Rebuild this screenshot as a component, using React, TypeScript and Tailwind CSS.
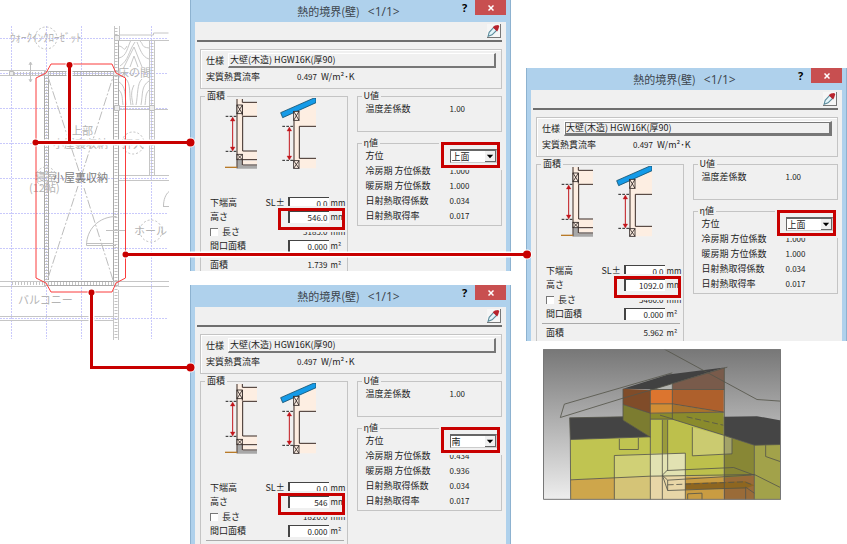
import { useId } from "react";

type DialogData = {
  size: string;
  height: string;
  length: string;
  area?: string;
  direction: string;
  cooling: string;
  heating: string;
  formula?: string;
  focused?: boolean;
};

const dialogs: Record<string, DialogData> = {
  top: {
    size: "h-[271px]",
    height: "546.0",
    length: "3185.0",
    area: "1.739",
    direction: "上面",
    cooling: "1.000",
    heating: "1.000",
  },
  right: {
    size: "h-[273px]",
    height: "1092.0",
    length: "5460.0",
    area: "5.962",
    direction: "上面",
    cooling: "1.000",
    heating: "1.000",
    formula: "(5.460 × 1.092 - 0.000)",
    focused: true,
  },
  bottom: {
    size: "h-[259px]",
    height: "546",
    length: "1820.0",
    direction: "南",
    cooling: "0.434",
    heating: "0.936",
  },
};

const inputClass =
  "h-[12px] w-[41px] border-t border-l-2 border-[#444] bg-white pr-px text-right text-[8px] leading-[11px] outline-none";
const unitClass = "w-[15px] pl-[2px] text-[8px]";

function CrossBox({ x, y, w, h }: { x: number; y: number; w: number; h: number }) {
  return (
    <g stroke="#2a2220" strokeWidth="2.5" fill="#fdeee2">
      <rect x={x} y={y} width={w} height={h} />
      <path d={`M${x} ${y}l${w} ${h}M${x + w} ${y}l${-w} ${h}`} />
    </g>
  );
}

function Arrow({ x, y1, y2 }: { x: number; y1: number; y2: number }) {
  return (
    <g fill="#c1161c" stroke="#c1161c" strokeWidth="3">
      <path d={`M${x} ${y1 + 6}V${y2 - 6}`} />
      <path strokeWidth="1" d={`M${x} ${y1}l7 12h-14zM${x} ${y2}l7 -12h-14z`} />
    </g>
  );
}

function WallSections() {
  return (
    <svg className="-mt-[3px] ml-[24px] h-[72px] w-[91px]" viewBox="15 9 273 216" fill="none" aria-hidden="true">
      <path fill="#fdeee2" d="M50 12h16v10h45v42H68v104h43v26H50z" />
      <path fill="#a8a8a8" d="M52 194h14v18h45v9H52z" />
      <path fill="#fdeee2" d="M67 197h44v10H67z" />
      <path stroke="#3a2a25" strokeWidth="3" d="M51 12v208M67 12v10h44M67 30v32M111 64H68v104h43M67 194h44M67 194v16h44" />
      <path stroke="#b87a28" strokeWidth="4" d="M15 217h36" />
      <path stroke="#222" strokeWidth="3" strokeDasharray="8 4" d="M17 64h34M17 169h34" />
      <CrossBox x={51} y={30} w={16} h={26} />
      <CrossBox x={51} y={178} w={16} h={16} />
      <Arrow x={38} y1={66} y2={168} />

      <path fill="#fdeee2" d="M222 60l66-38v72h-50v96h50v30h-66z" />
      <path stroke="#3a2a25" strokeWidth="3" d="M222 76v122M288 94h-50v96h50" />
      <path stroke="#222" strokeWidth="3" strokeDasharray="8 4" d="M187 94h34M187 196h34" />
      <path fill="#159be8" stroke="#15506f" strokeWidth="2.5" d="M182 53L282 9h6v14L188 68z" />
      <CrossBox x={221} y={49} w={16} h={27} />
      <CrossBox x={221} y={197} w={16} h={23} />
      <Arrow x={208} y1={96} y2={195} />
    </svg>
  );
}

function Picker() {
  return (
    <button type="button" aria-label="スポイト" className="h-[14px] w-[14px] border-r border-b border-[#777] bg-[#f6f6f6]">
      <svg viewBox="0 0 36 36" className="block h-[13px] w-[13px]" fill="none">
        <path d="M3 34l3-11L19 9l8 8L14 30z" fill="#e4f5fa" stroke="#5a8a9a" strokeWidth="3" />
        <path d="M16 9l12 12 3-6 3-9-3-3-9 1z" fill="#b8232c" />
      </svg>
    </button>
  );
}

function Legend({ children }: { children: string }) {
  return <legend className="ml-[4px] px-[2px] leading-[10px]">{children}</legend>;
}

function Highlight({ className }: { className: string }) {
  return (
    <span
      className={`pointer-events-none absolute z-10 border-[3px] border-[#c80000] shadow-[0_0_0_2px_#f0f0f0] ${className}`}
    />
  );
}

function Dialog({ data }: { data: DialogData }) {
  const uid = useId();
  const rates = [
    { label: "冷房期 方位係数", value: data.cooling },
    { label: "暖房期 方位係数", value: data.heating },
    { label: "日射熱取得係数", value: "0.034" },
    { label: "日射熱取得率", value: "0.017" },
  ];

  return (
    <section
      className={`relative overflow-hidden border-x border-[#8db2d0] bg-[#afd1ec] px-[4px] text-[9px] leading-[14px] whitespace-nowrap text-[#1c1c1c] ${data.size}`}
    >
      <header className="flex h-[22px] items-start">
        <h2 className="flex-1 pl-[48px] text-center text-[11px] leading-[23px] text-[#3c454d]">
          熱的境界(壁)
          <span className="ml-[8px] font-['Open_Sans',sans-serif] text-[12px]">&lt;1/1&gt;</span>
        </h2>
        <button type="button" className="w-[21px] font-['Open_Sans',sans-serif] text-[11px] leading-[16px] font-bold text-black">
          ?
        </button>
        <button type="button" aria-label="閉じる" className="flex h-[15px] w-[31px] items-center justify-center bg-[#c84f50]">
          <svg viewBox="0 0 6 6" className="h-[6px] w-[6px]" stroke="#fff" strokeWidth="1.5">
            <path d="M.5 .5l5 5M5.5 .5l-5 5" />
          </svg>
        </button>
      </header>

      <div className="h-full bg-[#f0f0f0] pr-[4px] pl-[2px]">
        <div className="flex h-[20px] justify-end border-b-2 border-[#6e6e6e] pt-[2px] pr-px">
          <Picker />
        </div>

        <div className="mt-[7px] ml-[3px] h-[40px] border border-[#c4c4c4] px-[5px] pt-[3px] shadow-[inset_1px_1px_0_#fff]">
          <div className="flex items-center">
            <span className="w-[22px] pt-[1px]">仕様</span>
            <button
              type="button"
              className="h-[15px] flex-1 border-t border-r-2 border-b-2 border-l border-t-white border-r-[#777] border-b-[#777] border-l-white text-left"
            >
              <span className={`block leading-[10px] ${data.focused ? "border border-[#777]" : "border border-transparent"}`}>
                大壁(木造) HGW16K(厚90)
              </span>
            </button>
          </div>
          <div className="flex pt-[2px]">
            <span className="w-[91px]">実質熱貫流率</span>
            <span className="w-[24px] text-[8px]">0.497</span>
            <span>W/m²･K</span>
          </div>
        </div>

        <div className="mt-[2px] ml-[3px] flex gap-[9px]">
          <fieldset className="h-[200px] min-w-0 flex-1 border border-[#c4c4c4]">
            <Legend>面積</Legend>
            <WallSections />
            <div className="mt-[25px] pr-[3px] pl-[9px]">
              <div className="flex h-[15px] items-center">
                <label htmlFor={`${uid}-base`} className="flex-1">下端高</label>
                <span className="w-[22px]">SL±</span>
                <input id={`${uid}-base`} defaultValue="0.0" className={inputClass} />
                <span className={unitClass}>mm</span>
              </div>
              <div className="flex h-[14px] items-center">
                <label htmlFor={`${uid}-height`} className="flex-1">高さ</label>
                <input id={`${uid}-height`} defaultValue={data.height} className={inputClass} />
                <span className={unitClass}>mm</span>
              </div>
              <div className="flex h-[15px] items-center">
                <input
                  id={`${uid}-length`}
                  type="checkbox"
                  className="mr-[4px] h-[8px] w-[8px] appearance-none border-t border-l border-[#777] bg-white"
                />
                <label htmlFor={`${uid}-length`} className="flex-1">長さ</label>
                <span className="pr-px text-[8px]">{data.length}</span>
                <span className={unitClass}>mm</span>
              </div>
              <div className="flex h-[14px] items-center">
                <label htmlFor={`${uid}-opening`} className="flex-1">間口面積</label>
                <input id={`${uid}-opening`} defaultValue="0.000" className={inputClass} />
                <span className={unitClass}>m²</span>
              </div>
            </div>
            <div className="mt-[2px] mr-[3px] ml-[5px] border-t border-[#aaa] pt-[2px] pl-[4px]">
              {data.area && (
                <div className="flex">
                  <span className="flex-1">面積</span>
                  <span className="pr-px text-[8px]">{data.area}</span>
                  <span className={unitClass}>m²</span>
                </div>
              )}
              {data.formula && <div className="text-[8px] leading-[10px]">{data.formula}</div>}
            </div>
          </fieldset>

          <div className="min-w-0 flex-1">
            <fieldset className="h-[41px] border border-[#c4c4c4]">
              <Legend>U値</Legend>
              <div className="flex pt-px pl-[8px]">
                <span className="w-[84px]">温度差係数</span>
                <span className="text-[8px]">1.00</span>
              </div>
            </fieldset>
            <fieldset className="mt-[6px] h-[88px] border border-[#c4c4c4]">
              <Legend>η値</Legend>
              <div className="flex h-[15px] items-center pl-[8px]">
                <label htmlFor={`${uid}-direction`} className="w-[84px]">方位</label>
                <div className="relative">
                  <select
                    id={`${uid}-direction`}
                    defaultValue={data.direction}
                    className="block h-[14px] w-[47px] appearance-none border border-t-2 border-[#666] border-r-[#ccc] border-b-[#ccc] bg-white pl-px text-[9px] leading-[11px]"
                  >
                    <option>上面</option>
                    <option>南</option>
                  </select>
                  <svg
                    viewBox="0 0 11 11"
                    className="pointer-events-none absolute top-[2px] right-px h-[11px] w-[11px] border-r border-b border-[#666] bg-[#f0f0f0]"
                  >
                    <path d="M2 4h7L5.5 8z" fill="#000" />
                  </svg>
                </div>
              </div>
              {rates.map((rate) => (
                <div key={rate.label} className="flex pl-[8px] leading-[15px]">
                  <span className="w-[84px]">{rate.label}</span>
                  <span className="text-[8px]">{rate.value}</span>
                </div>
              ))}
            </fieldset>
          </div>
        </div>
      </div>

      <Highlight className="top-[208px] left-[87px] h-[22px] w-[67px]" />
      <Highlight className="top-[142px] left-[250px] h-[26px] w-[59px]" />
    </section>
  );
}

function FloorPlan() {
  return (
    <svg viewBox="0 0 169 340" className="block h-[340px] w-[169px]" fill="none" aria-label="平面図">
      <g stroke="#c9c9fb" strokeDasharray="2 1">
        <path d="M11.5 26v313M46.5 26v313M81.5 26v313M151.5 26v313" />
        <path d="M0 38.5h168M0 73.5h168M0 108.5h168M0 143.5h168M0 178.5h168M0 213.5h168M0 248.5h168M0 318.5h168" />
      </g>

      {/* walls */}
      <g stroke="#c6c6c6">
        <path d="M0 70.5h46M0 75.5h46M0 281.5h46M0 286.5h46M118 281.5h51M118 286.5h51M0 316.5h113M0 320.5h113" />
        <path d="M114.5 26v45M119.5 26v9h34v-2h15M119 40.5h50M118.5 290v50M113.5 290v50M149.5 40v66M154.5 40v66M149.5 110v66M154.5 110v66" />
        <path d="M118 106.5h36M118 109.5h50M118 175.5h51M118 180.5h51" />
      </g>
      <g stroke="#a9a9a9">
        <path d="M44.5 71v212M48.5 75v205M113.5 71v212M118.5 40v245M44 71.5h71M48 75.5h66M48 281.5h66M44 285.5h72" />
      </g>
      <g stroke="#c4c4c4" strokeWidth="3" strokeDasharray="1 2">
        <path d="M46.5 75v207M116 28v312M47 73.5h67M14 73.5h30M12 283.5h32M48 283.5h66M152 40v136" />
      </g>
      <g stroke="#bdbdbd" fill="#eeeeee">
        <path d="M44.5 71.5h4v4h-4zM113.5 71.5h5v4h-5zM44.5 281.5h4v4h-4zM113.5 281.5h5v4h-5zM9.5 71.5h4v4h-4zM114.5 35.5h5v5h-5zM149.5 105.5h5v5h-5zM114.5 105.5h5v5h-5z" />
      </g>
      <path stroke="#bdbdbd" strokeDasharray="9 2 2 2" d="M48 77l33 100l32-100M48 278l30-92M113 280L84 188" />

      {/* tokonoma wood grain */}
      <g stroke="#c8c8c8">
        <path d="M119 46c6 1 4 7 8 0M119 58c8-2 8-10 12-18M120 66c9-6 8-14 15-24M124 67l10-20 8 20M130 67l4-11 4 11M149 48c-8-1-5-3-9-7M149 59c-7-2-9-10-12-17" />
        <path d="M119 82c7 4 6 14 7 23M119 90c4 4 3 9 4 15M126 79c5 5 3 16 5 26M134 85c-4 8-2 13-1 20M149 81c-8 5-6 13-8 24M149 90c-4 4-3 9-4 15M142 79c-5 4-4 16-6 26" />
      </g>

      {/* doors and centre marks */}
      <g stroke="#c0c0c0">
        <path d="M116 245.5H86.5c0-16 12-29 30-29M86 243.5h28M106 230.500h20M163.5 206.5c0-7 2-12 5.500-15M163 206.500h6M30.500 62v20M29 65l1.5-3 1.5 3M29 79l1.5 3 1.5-3" />
        <g strokeDasharray="2 2">
          <circle cx="46" cy="38" r="11" />
          <circle cx="133" cy="143" r="11" />
          <circle cx="151" cy="231" r="11" />
          <circle cx="46" cy="177" r="10" />
        </g>
      </g>

      <g fill="#b4b4b4" className="font-['Noto_Sans_CJK_JP',sans-serif] text-[11px]">
        <text x="10" y="42">ｳｫｰｸｲﾝｸﾛｰｾﾞｯﾄ</text>
        <text x="118" y="77">床の間</text>
        <text x="71" y="135">上部</text>
        <text x="53" y="148">小屋裏収納</text>
        <text x="122" y="148">押入</text>
        <text x="35" y="181">寝室</text>
        <text x="29" y="192">(12帖)</text>
        <text x="134" y="235">ホール</text>
        <text x="18" y="304">バルコニー</text>
        <text x="53" y="182" fill="#808080">小屋裏収納</text>
      </g>

      <path stroke="#fa3c3c" d="M51 64h61l4 9 9.5 5v200l-9.5 5-4 9H51l-5-9-10-5V78l10-5z" />
    </svg>
  );
}

function HouseModel() {
  return (
    <svg viewBox="9 12 714 452" className="ml-[17px] block h-[151px] w-[238px]" aria-label="熱的境界モデル">
      <defs>
        <linearGradient id="sky" x1="0" y1="0" x2="0" y2="1">
          <stop offset="0" stopColor="#777" />
          <stop offset="1" stopColor="#eee" />
        </linearGradient>
      </defs>
      <path fill="url(#sky)" d="M9 12h714v452H9z" />

      <path fill="#c0c451" d="M91 283l240-8v118L92 404z" />
      <path fill="#cea64b" d="M92 404l239-11v71H92z" />
      <path fill="#bdc04c" d="M331 222l66 0 154 50v122l-220 0z" />
      <path fill="#c99c42" d="M331 394h220v70H331z" />
      <path fill="#888735" d="M551 270l92 30v90l-92 18z" />
      <path fill="#9a6b38" d="M551 398l92-8v74h-92z" />
      <path fill="#a2a24a" d="M643 298l80-2v168h-80z" />

      <path fill="#444" d="M89 218l160-3 82 60-240 8z" />
      <path fill="#454545" d="M551 215l100-2 72 13v72l-80 2-92-30z" />
      <path fill="#7c7c30" d="M249 178l82 26v72l-82-51z" />
      <path fill="#8a8b2c" d="M331 204l220-2v68l-154-48-66 0z" />
      <path fill="#804c29" d="M249 131l82 4v70l-82-27z" />
      <path fill="#dc752f" d="M331 134h66v42h-66z" />
      <path fill="#d18d35" d="M331 176h66v26l-66 3z" />
      <path fill="#ae602c" d="M397 133h154v68l-154-24z" />
      <path fill="#a8722c" d="M397 177l154 24-154 3z" />
      <path fill="#795b4b" d="M397 114l156-46v65H397z" />
      <path fill="#b4b4b0" d="M342 132l55-18v18z" />
      <path fill="#414141" d="M249 131L385 88l168-21-211 65z" />

      <path fill="#d0d076" d="M223 331l108-5v68l-108 4z" />
      <path fill="#d5c477" d="M223 398l108-4v70H223z" />
      <path fill="#e2e2b2" d="M331 326l105-2v70H331z" />
      <path fill="#e8d6a7" d="M331 394h105v70H331z" />
      <path fill="#cbcb70" d="M457 246l94 26v57l-94 3z" />
      <path fill="#a3a368" d="M551 272l25 8v46l-25 2z" />
      <path fill="#9a9b3b" d="M367 224h16v100h-16z" />
      <path fill="#8e6620" d="M436 414l180-6 27 12-26 10-181 3z" />

      <g fill="none" stroke="#55554b" strokeWidth="2.5">
        <path d="M373 12l278 151 72 5M61 217l12-40L397 83M61 217l188-58 93-27 220-66M249 131v94l82 51M331 134v330M397 114v108M553 67v397" />
        <path d="M331 133h222M249 178l82 26 220-3M331 176h66l154 25M397 222l154 48 92 30 80-2M89 218l2 65 1 181M89 218l160-3M91 283l240-8" />
        <path d="M238 281v32h57v-35M223 331l213-7v140M223 331v133M457 246v86l119-6v-46M367 224v240M383 224v152M643 300v164M677 300v34l46 16" />
        <path d="M92 404l239-11 312-5 80 40M367 390l14-14 200-9 62 23M367 390l16 15 260-16M383 405v31l234-8M367 390l16 46" />
        <path d="M443 464v-18l43-2v20M617 464v-38l26 18M331 222h66M360 210l40 12" />
        <path strokeDasharray="18 8" d="M383 419l230-9 27 10M440 215l110 25" />
      </g>
      <path fill="none" stroke="#777" strokeWidth="3" d="M10.5 13.5h711v449h-711z" />
    </svg>
  );
}

function Connectors() {
  const lines = ["M69.5 65v77.5", "M35 142.5h155", "M125 254.5h402", "M91.5 292v75.5H190"];
  const dots = [
    [69.5, 65, 3],
    [35.5, 142.5, 3],
    [190.5, 142.5, 4],
    [125.5, 254.5, 3],
    [527, 254.5, 4],
    [91.5, 292.5, 3],
    [190.5, 367.5, 4],
  ];
  return (
    <svg className="pointer-events-none absolute top-0 left-0 z-20 h-[544px] w-[847px]" viewBox="0 0 847 544" fill="none">
      <path d={lines.join("")} stroke="#fff" strokeWidth="6" />
      {dots.map(([cx, cy, r]) => (
        <circle key={`${cx}-${cy}`} cx={cx} cy={cy} r={r} fill="#c80000" stroke="#fff" strokeWidth="2" />
      ))}
      <path d={lines.join("")} stroke="#c80000" strokeWidth="3" />
      {dots.map(([cx, cy, r]) => (
        <circle key={`${cx}-${cy}`} cx={cx} cy={cy} r={r} fill="#c80000" />
      ))}
    </svg>
  );
}

export default function App() {
  return (
    <main
      lang="ja"
      className="relative flex max-w-[847px] items-start bg-white font-['Noto_Sans_CJK_JP',sans-serif]"
    >
      <div className="w-[190px] shrink-0">
        <FloorPlan />
      </div>
      <div className="flex min-w-0 flex-1 flex-col gap-[14px]">
        <Dialog data={dialogs.top} />
        <Dialog data={dialogs.bottom} />
      </div>
      <div className="ml-[15px] flex min-w-0 flex-1 flex-col gap-[8px] pt-[68px]">
        <Dialog data={dialogs.right} />
        <HouseModel />
      </div>
      <Connectors />
    </main>
  );
}
